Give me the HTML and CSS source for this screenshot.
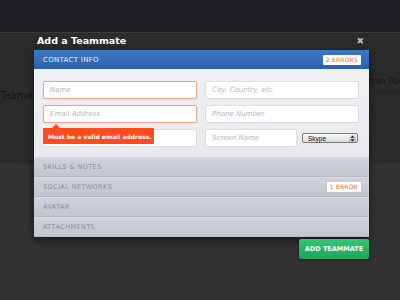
FILE: index.html
```html
<!DOCTYPE html>
<html>
<head>
<meta charset="utf-8">
<link rel="stylesheet" href="styles.css">
</head>
<body>
<div class="page">
  <div class="topbar"></div>
  <div class="content">
    <div class="bg-left"><span>Teammates</span></div>
    <div class="bg-right">
      <div class="bg-name">Jonathan Ra</div>
      <div class="bg-sub">Designer, Brooklyn</div>
    </div>
  </div>
</div>

<div class="dialog">
  <div class="dialog-title">
    <span>Add a Teammate</span>
    <span class="close">&#x2716;</span>
  </div>
  <div class="panel">
    <div class="panel-head">
      <span>CONTACT INFO</span>
      <span class="badge">2 ERRORS</span>
    </div>
    <div class="panel-body">
      <div class="grid">
        <div class="field error"><span class="ph">Name</span></div>
        <div class="field"><span class="ph">City, Country, etc.</span></div>
        <div class="field error"><span class="ph">Email Address</span></div>
        <div class="field"><span class="ph">Phone Number</span></div>
        <div class="field"></div>
        <div class="im-row">
          <div class="field screen"><span class="ph">Screen Name</span></div>
          <div class="select"><span>Skype</span><span class="arrows"><svg width="5" height="7" viewBox="0 0 5 7"><path d="M2.5 0.5 L4.5 2.8 L0.5 2.8 Z M2.5 6.5 L4.5 4.2 L0.5 4.2 Z" fill="#222"/></svg></span></div>
        </div>
      </div>
      <div class="tooltip">Must be a valid email address.</div>
    </div>
    <div class="section">SKILLS &amp; NOTES</div>
    <div class="section"><span>SOCIAL NETWORKS</span><span class="badge">1 ERROR</span></div>
    <div class="section">AVATAR</div>
    <div class="section">ATTACHMENTS</div>
  </div>
  <div class="actions">
    <div class="btn">ADD TEAMMATE</div>
  </div>
</div>
</body>
</html>
```
FILE: styles.css
```css
html, body {
  margin: 0;
  padding: 0;
}
body {
  width: 400px;
  height: 300px;
  overflow: hidden;
  background: #323232;
  font-family: "DejaVu Sans", Verdana, sans-serif;
  position: relative;
}
.page {
  height: 300px;
}
.topbar {
  height: 32px;
  background: #1f2023;
  border-bottom: 1px solid #3a3a3a;
}
.content {
  display: flex;
  justify-content: space-between;
  background: #2b2b2b;
  height: 130px;
}
.bg-left {
  width: 34px;
  overflow: hidden;
  white-space: nowrap;
  margin-top: 57px;
  color: #161616;
  font-size: 10px;
}
.bg-right {
  width: 31px;
  overflow: hidden;
  white-space: nowrap;
  margin-top: 43px;
  display: flex;
  flex-direction: column;
  align-items: flex-end;
  color: #171717;
}
.bg-name {
  font-size: 9px;
}
.bg-sub {
  font-size: 6px;
  color: #222;
  margin-top: 2px;
}
.dialog {
  position: absolute;
  left: 34px;
  top: 31px;
  width: 335px;
}
.dialog-title {
  display: flex;
  justify-content: space-between;
  align-items: center;
  height: 19px;
  padding: 0 5px 0 3px;
  color: #fff;
  font-weight: bold;
  font-size: 9.5px;
}
.close {
  color: #b9b9b9;
  font-size: 9px;
}
.panel {
  background: #eceef1;
  box-shadow: 0 3px 8px rgba(0,0,0,0.6);
}
.panel-head {
  height: 19px;
  display: flex;
  align-items: center;
  justify-content: space-between;
  padding: 0 8px 0 9px;
  background: linear-gradient(#3d78c4, #2a60aa);
  color: #e6eefa;
  font-size: 7px;
  letter-spacing: 0.3px;
}
.badge {
  background: #fff;
  color: #f0562a;
  font-size: 6px;
  padding: 1px 3px;
  border-radius: 1px;
  letter-spacing: 0.2px;
  line-height: 8px;
}
.panel-body {
  position: relative;
  padding: 12px 10px 10px 9px;
  background: linear-gradient(#eef0f3, #e8eaee);
}
.grid {
  display: grid;
  grid-template-columns: 154px 154px;
  column-gap: 8px;
  row-gap: 6px;
}
.field {
  height: 18px;
  box-sizing: border-box;
  background: #fff;
  border: 1px solid #dadde2;
  border-radius: 2px;
  display: flex;
  align-items: center;
  padding-left: 6px;
}
.field.error {
  border-color: #eea184;
  box-shadow: 0 0 1px #f6c3b0;
}
.ph {
  color: #b3b6bc;
  font-style: italic;
  font-size: 7px;
}
.im-row {
  display: flex;
  align-items: center;
  gap: 5px;
}
.field.screen {
  width: 92px;
}
.select {
  width: 56px;
  height: 10px;
  box-sizing: border-box;
  border: 1px solid #7d7d7d;
  border-radius: 2px;
  background: linear-gradient(#fafafa, #dcdcdc);
  display: flex;
  align-items: center;
  justify-content: space-between;
  font-family: "Liberation Sans", Arial, sans-serif;
  font-size: 6.5px;
  color: #111;
  padding-left: 5px;
  padding-right: 1px;
}
.arrows {
  display: flex;
  align-items: center;
  justify-content: center;
  width: 7px;
  height: 7px;
  background: linear-gradient(#e4e4e4, #b8b8b8);
  border-radius: 1px;
}
.arrows svg {
  display: block;
}
.tooltip {
  position: absolute;
  left: 9px;
  top: 59px;
  width: 111px;
  height: 16px;
  box-sizing: border-box;
  background: #fe4b1b;
  color: #fff;
  font-weight: bold;
  font-size: 6px;
  display: flex;
  align-items: center;
  padding-left: 5px;
  border-radius: 1px;
}
.tooltip::before {
  content: "";
  position: absolute;
  left: 9px;
  top: -4px;
  border-left: 4px solid transparent;
  border-right: 4px solid transparent;
  border-bottom: 4px solid #fe4b1b;
}
.section {
  height: 20px;
  box-sizing: border-box;
  display: flex;
  align-items: center;
  justify-content: space-between;
  padding: 0 8px 0 9px;
  background: linear-gradient(#cfd2db, #c3c6cf);
  border-top: 1px solid #d9dbe2;
  border-bottom: 1px solid #b6b9c2;
  color: #8b8f99;
  font-size: 6.5px;
  letter-spacing: 0.4px;
}
.actions {
  display: flex;
  justify-content: flex-end;
  margin-top: 2px;
}
.btn {
  width: 70px;
  height: 20px;
  box-sizing: border-box;
  border-radius: 2px;
  background: linear-gradient(#33c774, #1ca458);
  box-shadow: 0 1px 3px rgba(0,0,0,0.5);
  color: #fff;
  font-weight: bold;
  font-size: 6.5px;
  display: flex;
  align-items: center;
  justify-content: center;
}
```
